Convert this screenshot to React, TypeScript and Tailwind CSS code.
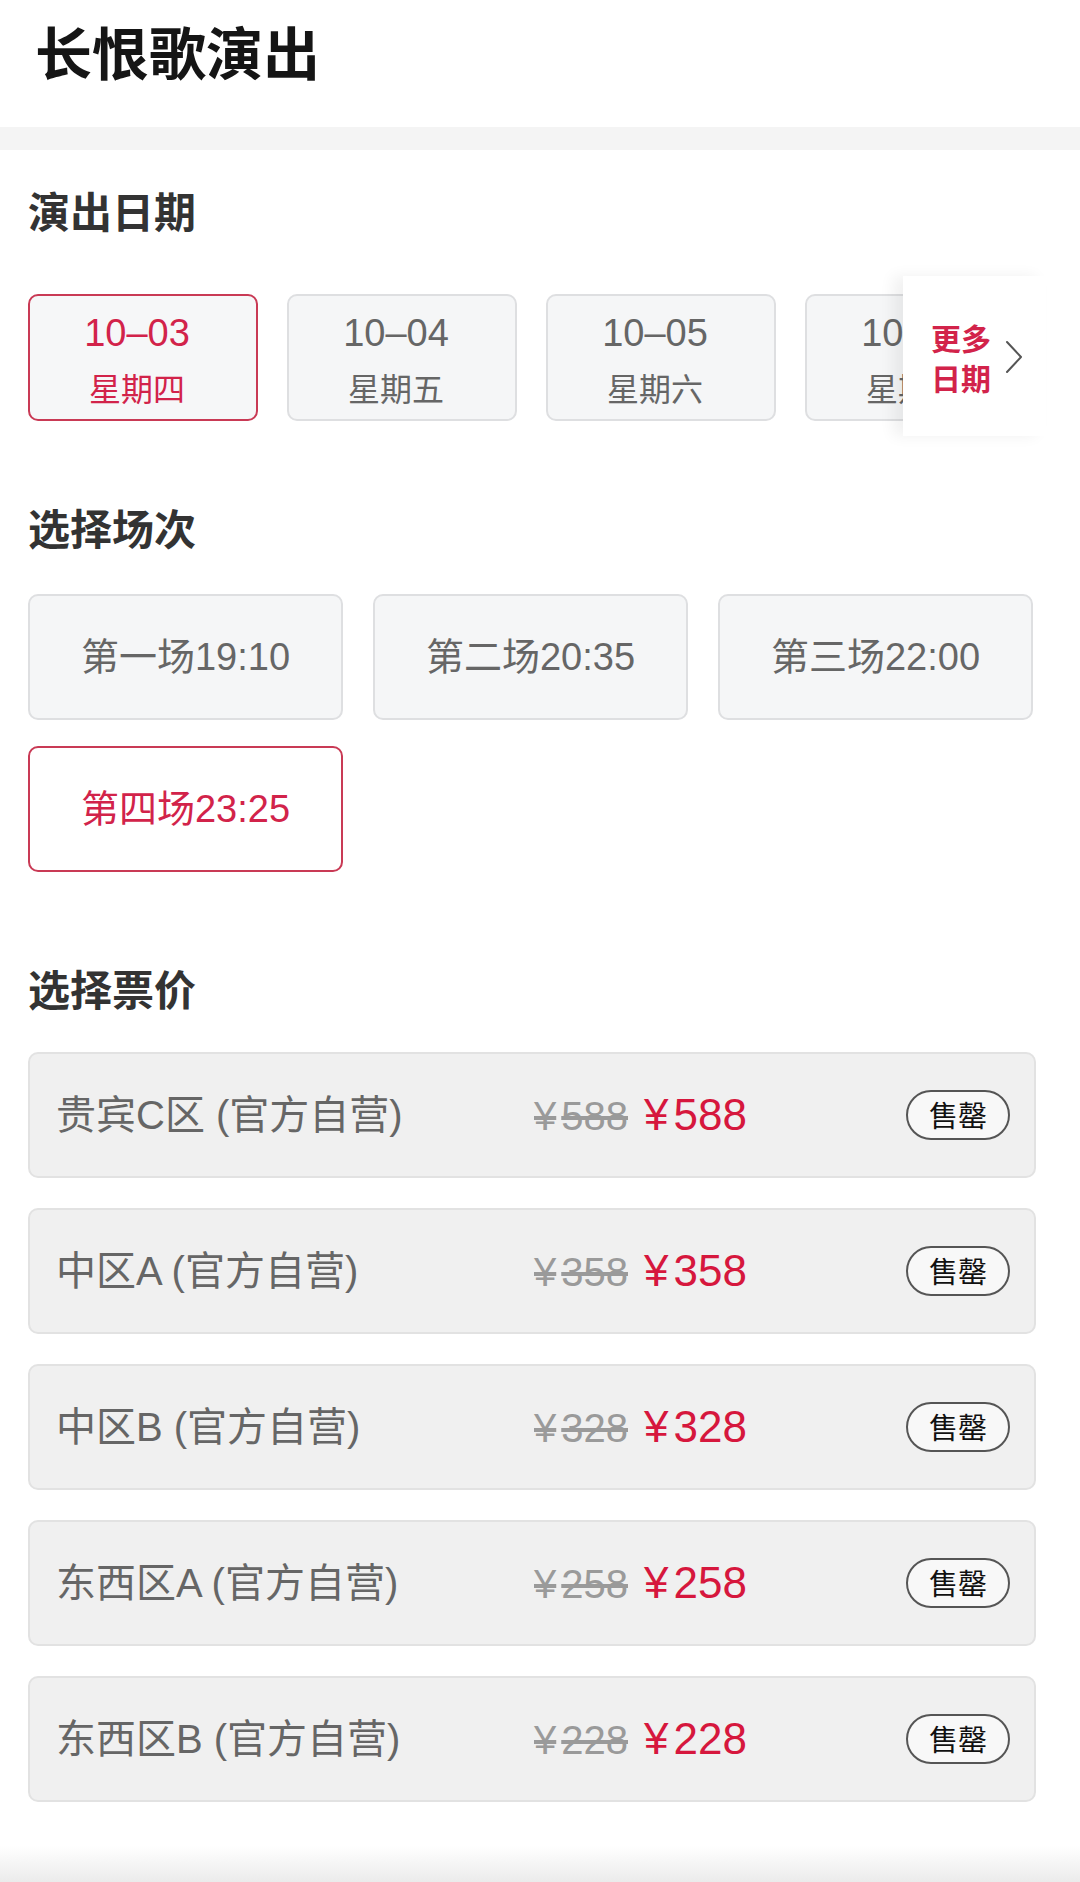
const dates = [
  { day: '10–03', week: '星期四', active: true },
  { day: '10–04', week: '星期五', active: false },
  { day: '10–05', week: '星期六', active: false },
  { day: '10–06', week: '星期日', active: false },
  { day: '10–07', week: '星期一', active: false },
];

const sessions = [
  { label: '第一场19:10', active: false },
  { label: '第二场20:35', active: false },
  { label: '第三场22:00', active: false },
  { label: '第四场23:25', active: true },
];

const prices = [
  { name: '贵宾C区 (官方自营)', price: 588 },
  { name: '中区A (官方自营)', price: 358 },
  { name: '中区B (官方自营)', price: 328 },
  { name: '东西区A (官方自营)', price: 258 },
  { name: '东西区B (官方自营)', price: 228 },
];

function SectionTitle({ children }: { children: string }) {
  return (
    <div className="text-[42px] leading-[40px] font-bold text-[#333] font-['Noto_Sans_CJK_SC',sans-serif]">
      {children}
    </div>
  );
}

export default function App() {
  return (
    <div className="flex flex-col w-full min-h-[1882px] bg-white font-['Liberation_Sans','Noto_Sans_CJK_SC',sans-serif]">
      {/* Header */}
      <div className="h-[127px] flex items-center pl-[35px] pb-[26px]">
        <h1 className="text-[57px] leading-none font-bold text-[#151515] font-['Noto_Sans_CJK_SC',sans-serif]">
          长恨歌演出
        </h1>
      </div>
      <div className="h-[23px] bg-[#f4f4f4]" />

      <div className="pl-[28px] pr-[44px]">
        {/* Dates */}
        <div className="mt-[40px]">
          <SectionTitle>演出日期</SectionTitle>
        </div>
        <div className="relative mt-[64px] mr-[-10px]">
          <div className="flex gap-[29px] overflow-hidden">
            {dates.map((d) => (
              <div
                key={d.day}
                className={`shrink-0 w-[230px] h-[127px] rounded-[10px] border-2 flex flex-col items-center justify-center pr-[12px] pt-[4px] ${
                  d.active
                    ? 'border-[#c93a55] bg-[#f6f7f8] text-[#d2234a]'
                    : 'border-[#dedfe1] bg-[#f5f6f7] text-[#666]'
                }`}
              >
                <span className="text-[38px] leading-[40px]">{d.day}</span>
                <span className="text-[32px] leading-[40px] mt-[14px] font-['Noto_Sans_CJK_SC',sans-serif]">{d.week}</span>
              </div>
            ))}
          </div>
          <div className="absolute right-0 top-[-18px] w-[143px] h-[160px] bg-white shadow-[-10px_0_14px_rgba(0,0,0,0.06)] flex items-center pl-[28px] pt-[2px]">
            <div className="flex flex-col text-[30px] leading-[40px] font-bold text-[#d2234a] font-['Noto_Sans_CJK_SC',sans-serif]">
              <span>更多</span>
              <span>日期</span>
            </div>
            <svg width="18" height="34" viewBox="0 0 18 34" className="ml-[14px]" fill="none">
              <polyline points="2,2 16,17 2,32" stroke="#555" strokeWidth="2" strokeLinecap="round" strokeLinejoin="round" />
            </svg>
          </div>
        </div>

        {/* Sessions */}
        <div className="mt-[86px]">
          <SectionTitle>选择场次</SectionTitle>
        </div>
        <div className="mt-[47px] grid grid-cols-[315px_315px_315px] gap-x-[30px] gap-y-[26px]">
          {sessions.map((s) => (
            <div
              key={s.label}
              className={`h-[126px] rounded-[10px] border-2 flex items-center justify-center text-[38px] ${
                s.active
                  ? 'border-[#c93a55] bg-white text-[#d2234a]'
                  : 'border-[#dedfe1] bg-[#f5f6f7] text-[#666]'
              }`}
            >
              {s.label}
            </div>
          ))}
        </div>

        {/* Prices */}
        <div className="mt-[96px]">
          <SectionTitle>选择票价</SectionTitle>
        </div>
        <div className="mt-[44px] flex flex-col gap-[30px]">
          {prices.map((p) => (
            <div
              key={p.name}
              className="h-[126px] rounded-[10px] border-2 border-[#e2e2e2] bg-[#f0f0f0] flex items-center pl-[26px] pr-[24px]"
            >
              <div className="w-[478px] shrink-0 text-[40px] text-[#666]">{p.name}</div>
              <div className="flex items-baseline gap-[16px]">
                <span className="text-[40px] text-[#9a9a9a] line-through">
                  ¥<span className="ml-[5px]">{p.price}</span>
                </span>
                <span className="text-[44px] text-[#d6173d]">
                  ¥<span className="ml-[5px]">{p.price}</span>
                </span>
              </div>
              <div className="ml-auto w-[104px] h-[50px] rounded-full border-2 border-[#555] bg-[#f8f8f8] flex items-center justify-center text-[29px] text-[#111] font-['Noto_Sans_CJK_SC',sans-serif]">
                售罄
              </div>
            </div>
          ))}
        </div>
      </div>

      <div className="mt-auto h-[36px] bg-gradient-to-b from-white to-[#ebebeb]" />
    </div>
  );
}
